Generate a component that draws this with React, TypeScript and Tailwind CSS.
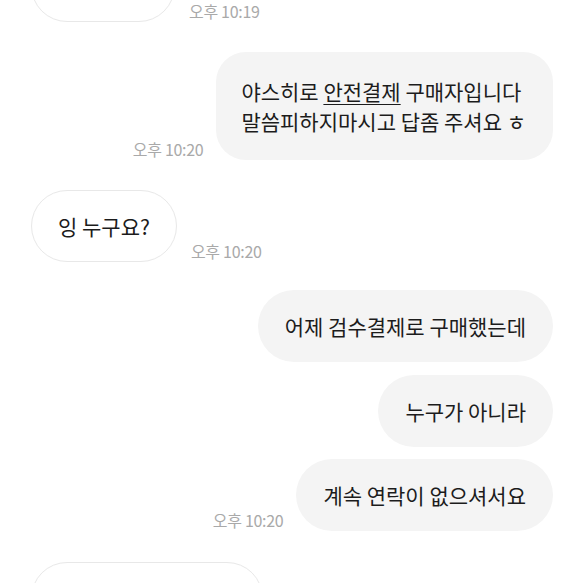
import React from "react";

const font = { fontFamily: '"Noto Sans CJK KR", "Noto Sans", sans-serif' };

function Time({ t }: { t: string }) {
  return (
    <span className="text-[16px] leading-[18px] text-[#a9a9a9] mb-[2px] whitespace-nowrap tracking-[-0.3px]">
      {t}
    </span>
  );
}

function In({ children, time, w }: { children?: React.ReactNode; time?: string; w?: string }) {
  return (
    <div className="flex items-end gap-[14px] pl-[31px]">
      <div
        className={`rounded-full border border-[#e8e8e8] bg-white h-[72px] flex items-center px-[26px] text-[21px] leading-[30px] text-[#1c1c1c] ${w ?? ""}`}
      >
        {children}
      </div>
      {time && <Time t={time} />}
    </div>
  );
}

function Out({ children, time, two }: { children: React.ReactNode; time?: string; two?: boolean }) {
  return (
    <div className="flex items-end justify-end gap-[13px] pr-[30px]">
      {time && <Time t={time} />}
      <div
        className={`bg-[#f4f4f4] text-[21px] leading-[30px] text-[#1c1c1c] px-[27px] whitespace-nowrap ${
          two ? "rounded-[30px] py-[24px] pl-[25px]" : "rounded-full py-[21px]"
        }`}
      >
        {children}
      </div>
    </div>
  );
}

export default function App() {
  return (
    <div className="w-[583px] h-[583px] overflow-hidden bg-white" style={font}>
      <div className="flex flex-col mt-[-50px]">
        <In time="오후 10:19" w="w-[144px]" />
        <div className="h-[30px]" />
        <Out time="오후 10:20" two>
          야스히로 <span className="underline underline-offset-[4px] decoration-[1px]">안전결제</span> 구매자입니다
          <br />
          말씀피하지마시고 답좀 주셔요 ㅎ
        </Out>
        <div className="h-[30px]" />
        <In time="오후 10:20">잉 누구요?</In>
        <div className="h-[28px]" />
        <Out>어제 검수결제로 구매했는데</Out>
        <div className="h-[13px]" />
        <Out>누구가 아니라</Out>
        <div className="h-[12px]" />
        <Out time="오후 10:20">계속 연락이 없으셔서요</Out>
        <div className="h-[31px]" />
        <In w="w-[232px]" />
      </div>
    </div>
  );
}
